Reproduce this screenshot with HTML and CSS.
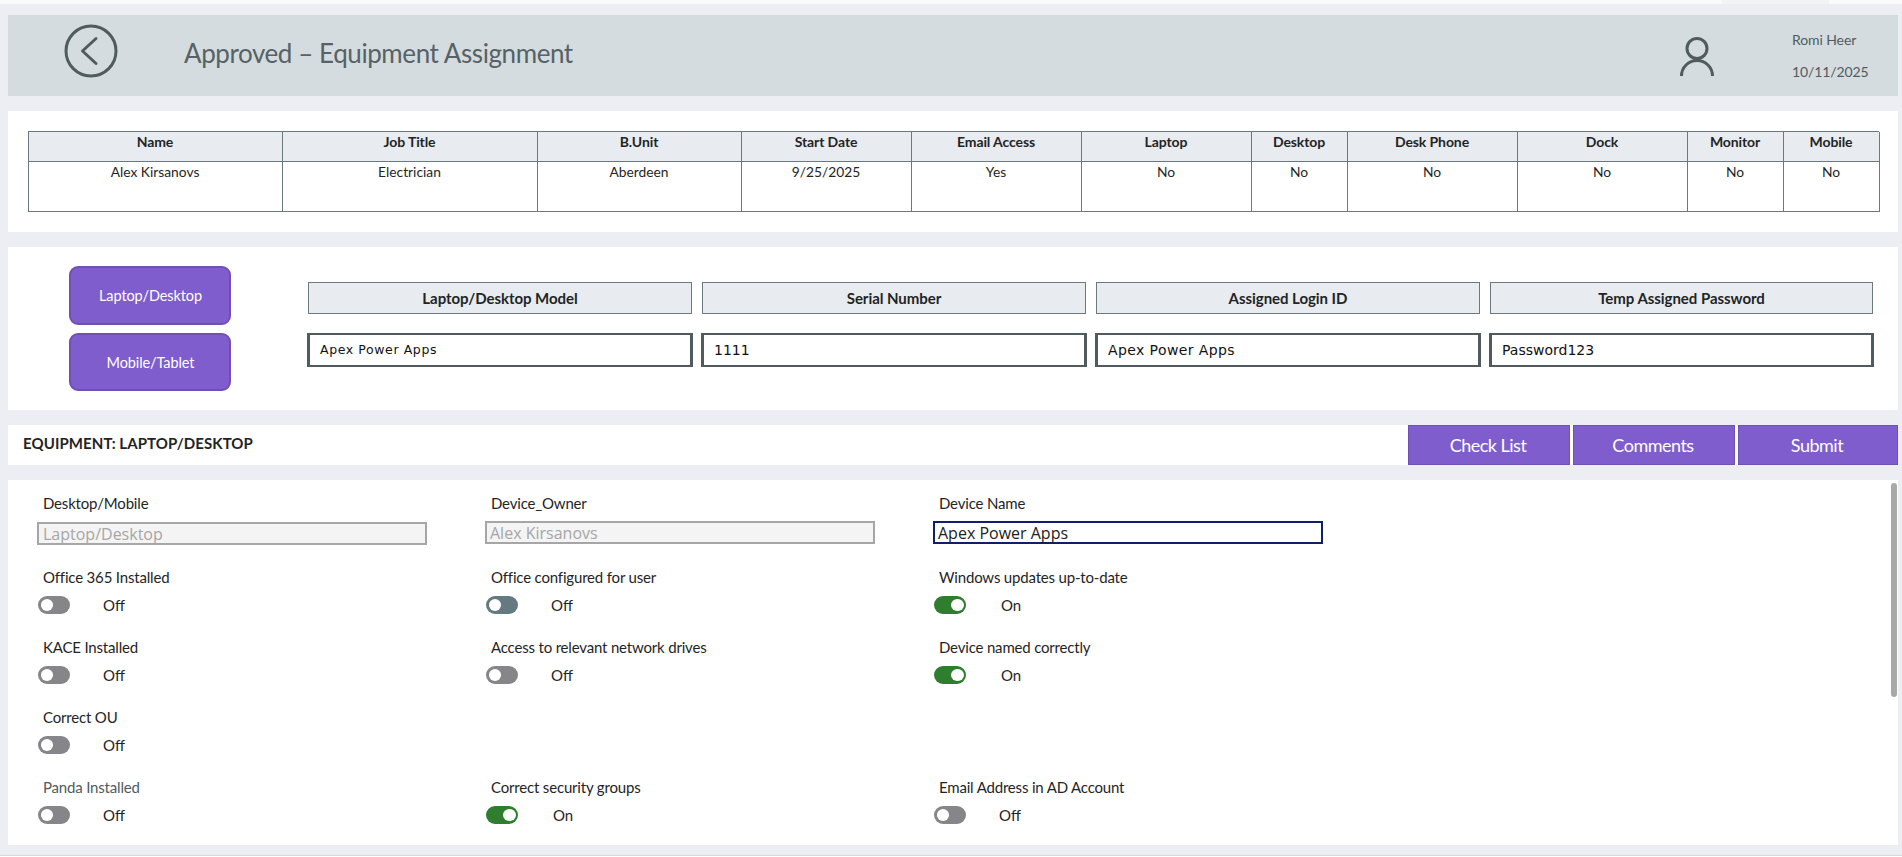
FILE: index.html
```html
<!DOCTYPE html>
<html lang="en">
<head>
<meta charset="utf-8">
<title>Approved – Equipment Assignment</title>
<link rel="stylesheet" href="styles.css">
</head>
<body>
<div class="top-strip"><span class="strip-gap"></span></div>
<header class="header">
  <svg class="back" viewBox="0 0 54 54" aria-hidden="true"><circle cx="27" cy="27" r="25" fill="none" stroke="#4f5b5e" stroke-width="3"/><path d="M32 14.5 L18.5 27 L32 39.5" fill="none" stroke="#4f5b5e" stroke-width="3" stroke-linecap="round" stroke-linejoin="round"/></svg>
  <h1 class="title">Approved – Equipment Assignment</h1>
  <svg class="user" viewBox="0 0 34 39" aria-hidden="true"><circle cx="17" cy="11.5" r="10" fill="none" stroke="#4f5b5e" stroke-width="3"/><path d="M1.5 39 A15.5 15.5 0 0 1 32.5 39" fill="none" stroke="#4f5b5e" stroke-width="3"/></svg>
  <div class="who"><span>Romi Heer</span><span>10/11/2025</span></div>
</header>

<section class="panel summary">
  <div class="grid-table">
    <div class="th">Name</div><div class="th">Job Title</div><div class="th">B.Unit</div><div class="th">Start Date</div><div class="th">Email Access</div><div class="th">Laptop</div><div class="th">Desktop</div><div class="th">Desk Phone</div><div class="th">Dock</div><div class="th">Monitor</div><div class="th">Mobile</div>
    <div class="td">Alex Kirsanovs</div><div class="td">Electrician</div><div class="td">Aberdeen</div><div class="td">9/25/2025</div><div class="td">Yes</div><div class="td">No</div><div class="td">No</div><div class="td">No</div><div class="td">No</div><div class="td">No</div><div class="td">No</div>
  </div>
</section>

<section class="panel assign">
  <div class="side">
    <button class="pill">Laptop/Desktop</button>
    <button class="pill">Mobile/Tablet</button>
  </div>
  <div class="assign-grid">
    <div class="cap">Laptop/Desktop Model</div><div class="cap">Serial Number</div><div class="cap">Assigned Login ID</div><div class="cap">Temp Assigned Password</div>
    <div class="box small">Apex Power Apps</div><div class="box">1111</div><div class="box wide">Apex Power Apps</div><div class="box">Password123</div>
  </div>
</section>

<section class="bar">
  <div class="bar-title">EQUIPMENT: LAPTOP/DESKTOP</div>
  <div class="actions"><button class="act">Check List</button><button class="act">Comments</button><button class="act">Submit</button></div>
</section>

<section class="panel form">
  <div class="form-grid">
    <div class="field"><div class="lbl">Desktop/Mobile</div><div class="inp off low">Laptop/Desktop</div></div>
    <div class="field"><div class="lbl">Device_Owner</div><div class="inp off">Alex Kirsanovs</div></div>
    <div class="field"><div class="lbl">Device Name</div><div class="inp focus">Apex Power Apps</div></div>

    <div class="field"><div class="lbl">Office 365 Installed</div><div class="tg"><span class="sw"></span><span class="st">Off</span></div></div>
    <div class="field"><div class="lbl">Office configured for user</div><div class="tg"><span class="sw hover"></span><span class="st">Off</span></div></div>
    <div class="field"><div class="lbl">Windows updates up-to-date</div><div class="tg"><span class="sw on"></span><span class="st">On</span></div></div>

    <div class="field"><div class="lbl">KACE Installed</div><div class="tg"><span class="sw"></span><span class="st">Off</span></div></div>
    <div class="field"><div class="lbl">Access to relevant network drives</div><div class="tg"><span class="sw"></span><span class="st">Off</span></div></div>
    <div class="field"><div class="lbl">Device named correctly</div><div class="tg"><span class="sw on"></span><span class="st">On</span></div></div>

    <div class="field"><div class="lbl">Correct OU</div><div class="tg"><span class="sw"></span><span class="st">Off</span></div></div>
    <div class="field"></div>
    <div class="field"></div>

    <div class="field"><div class="lbl dim">Panda Installed</div><div class="tg"><span class="sw"></span><span class="st">Off</span></div></div>
    <div class="field"><div class="lbl">Correct security groups</div><div class="tg"><span class="sw on"></span><span class="st">On</span></div></div>
    <div class="field"><div class="lbl">Email Address in AD Account</div><div class="tg"><span class="sw"></span><span class="st">Off</span></div></div>
  </div>
  <div class="thumb"></div>
</section>
</body>
</html>
```
FILE: styles.css
```css
* { box-sizing: border-box; }
html { background: #fff; }
body {
  margin: 0;
  height: 856px;
  overflow: hidden;
  background: #edeef3;
  font-family: Lato, "Liberation Sans", sans-serif;
  color: #1f2526;
  border-bottom: 1px solid #d8d9de;
}
button { font-family: inherit; cursor: pointer; }
.top-strip { height: 4px; background: #fafafa; }
.strip-gap { display: block; width: 107px; height: 4px; margin-left: 1722px; background: #f3f3f5; }

.header {
  margin: 11px 4px 0 8px;
  height: 81px;
  background: #d5dcdf;
  display: flex;
  align-items: center;
  color: #4f5b5e;
}
.back { width: 54px; height: 54px; margin: 0 0 9px 56px; flex: none; }
.title { margin: 0 0 5px 66px; font-size: 26px; letter-spacing: -0.42px; font-weight: 400; flex: 1; color: #566266; }
.user { width: 34px; height: 39px; margin: 2px 78px 0 0; flex: none; }
.who { width: 106px; display: flex; flex-direction: column; gap: 15px; font-size: 14px; letter-spacing: -0.1px; }

.panel { background: #fff; margin: 15px 4px 0 8px; }
.summary { height: 121px; padding: 20px 0 0 20px; }
.grid-table {
  display: grid;
  grid-template-columns: 254px 255px 204px 170px 170px 170px 96px 170px 170px 96px 96px;
  grid-template-rows: 30px 50px;
  width: 1851px;
  border: 1px solid #6b797d;
  border-right-width: 0;
  border-bottom-width: 0;
}
.th, .td {
  border-right: 1px solid #6b797d;
  border-bottom: 1px solid #6b797d;
  text-align: center;
  font-size: 13.8px;
  padding: 1px 1px 0 0;
}
.th { background: #e8ebf0; font-weight: 700; font-size: 14px; letter-spacing: -0.1px; }

.assign { height: 163px; display: flex; }
.side { width: 300px; padding: 19px 0 0 61px; display: flex; flex-direction: column; gap: 8px; }
.pill {
  width: 162px;
  height: 59px;
  background: #7f5dcc;
  border: 2px solid #6f50b3;
  border-radius: 9px;
  color: #fff;
  font-size: 14.5px;
  letter-spacing: -0.1px;
  padding: 0 0 0 1px;
}
.pill + .pill { height: 58px; }
.assign-grid {
  padding-top: 35px;
  display: grid;
  grid-template-columns: 384px 384px 384px 383px;
  grid-template-rows: 32px 34px;
  column-gap: 10px;
  row-gap: 19px;
}
.cap {
  background: #e8ebf0;
  border: 1px solid #6b797d;
  text-align: center;
  font-weight: 700;
  font-size: 15px;
  letter-spacing: -0.05px;
  line-height: 30px;
}
.box {
  border-style: solid;
  border-color: #4f5b5e;
  border-width: 2px 3px;
  background: #fff;
  font-family: "DejaVu Sans", sans-serif;
  font-size: 14px;
  line-height: 30px;
  padding-left: 10px;
  color: #111;
  margin: 0 -1px;
}
.box.small { font-size: 12.5px; letter-spacing: 0.6px; }
.box.wide { letter-spacing: 0.4px; }

.bar { margin: 15px 4px 0 8px; height: 40px; background: #fff; display: flex; justify-content: space-between; }
.bar-title { font-size: 15px; font-weight: 700; letter-spacing: 0.08px; padding: 9px 0 0 15px; }
.actions { display: flex; gap: 3px; }
.act {
  width: 162px;
  height: 40px;
  background: #7f5dcc;
  border: 1px solid #6f50b3;
  color: #fff;
  font-size: 18px;
  letter-spacing: -0.5px;
  padding: 0 2px 0 0;
}
.act:last-child { width: 160px; }

.form { height: 365px; position: relative; padding: 10px 0 0 29px; }
.form-grid {
  display: grid;
  grid-template-columns: 448px 448px 400px;
  grid-template-rows: 74px repeat(4, 70px);
}
.lbl { font-size: 15px; letter-spacing: -0.18px; height: 26px; line-height: 26px; padding-left: 6px; }
.lbl.dim { color: #4f5b5e; }
.inp {
  height: 23px;
  width: 390px;
  margin-top: 5px;
  border: 2px solid #0f1f6b;
  font-family: "Open Sans", sans-serif;
  font-size: 16px;
  line-height: 20px;
  padding-left: 3px;
  color: #222;
}
.inp.off { background: #f4f4f4; border-color: #a6a6a6; color: #a6a6a6; }
.inp.low { margin-top: 6px; padding-left: 4px; }
.tg { display: flex; align-items: center; height: 18px; margin-top: 6px; padding-left: 1px; }
.sw {
  width: 32px;
  height: 18px;
  border-radius: 9px;
  background: #85858a;
  position: relative;
  flex: none;
}
.sw::after {
  content: "";
  position: absolute;
  left: 2.5px;
  top: 3px;
  width: 12.5px;
  height: 12px;
  border-radius: 50%;
  background: #fff;
}
.sw.hover { background: #647a80; }
.sw.on { background: #2f7d2f; }
.sw.on::after { left: 17px; }
.st { margin-left: 33px; font-size: 15px; }
.sw.on + .st { margin-left: 35px; }
.thumb { position: absolute; right: 1px; top: 3px; width: 6px; height: 214px; border-radius: 3px; background: #a8a8a8; }
```
